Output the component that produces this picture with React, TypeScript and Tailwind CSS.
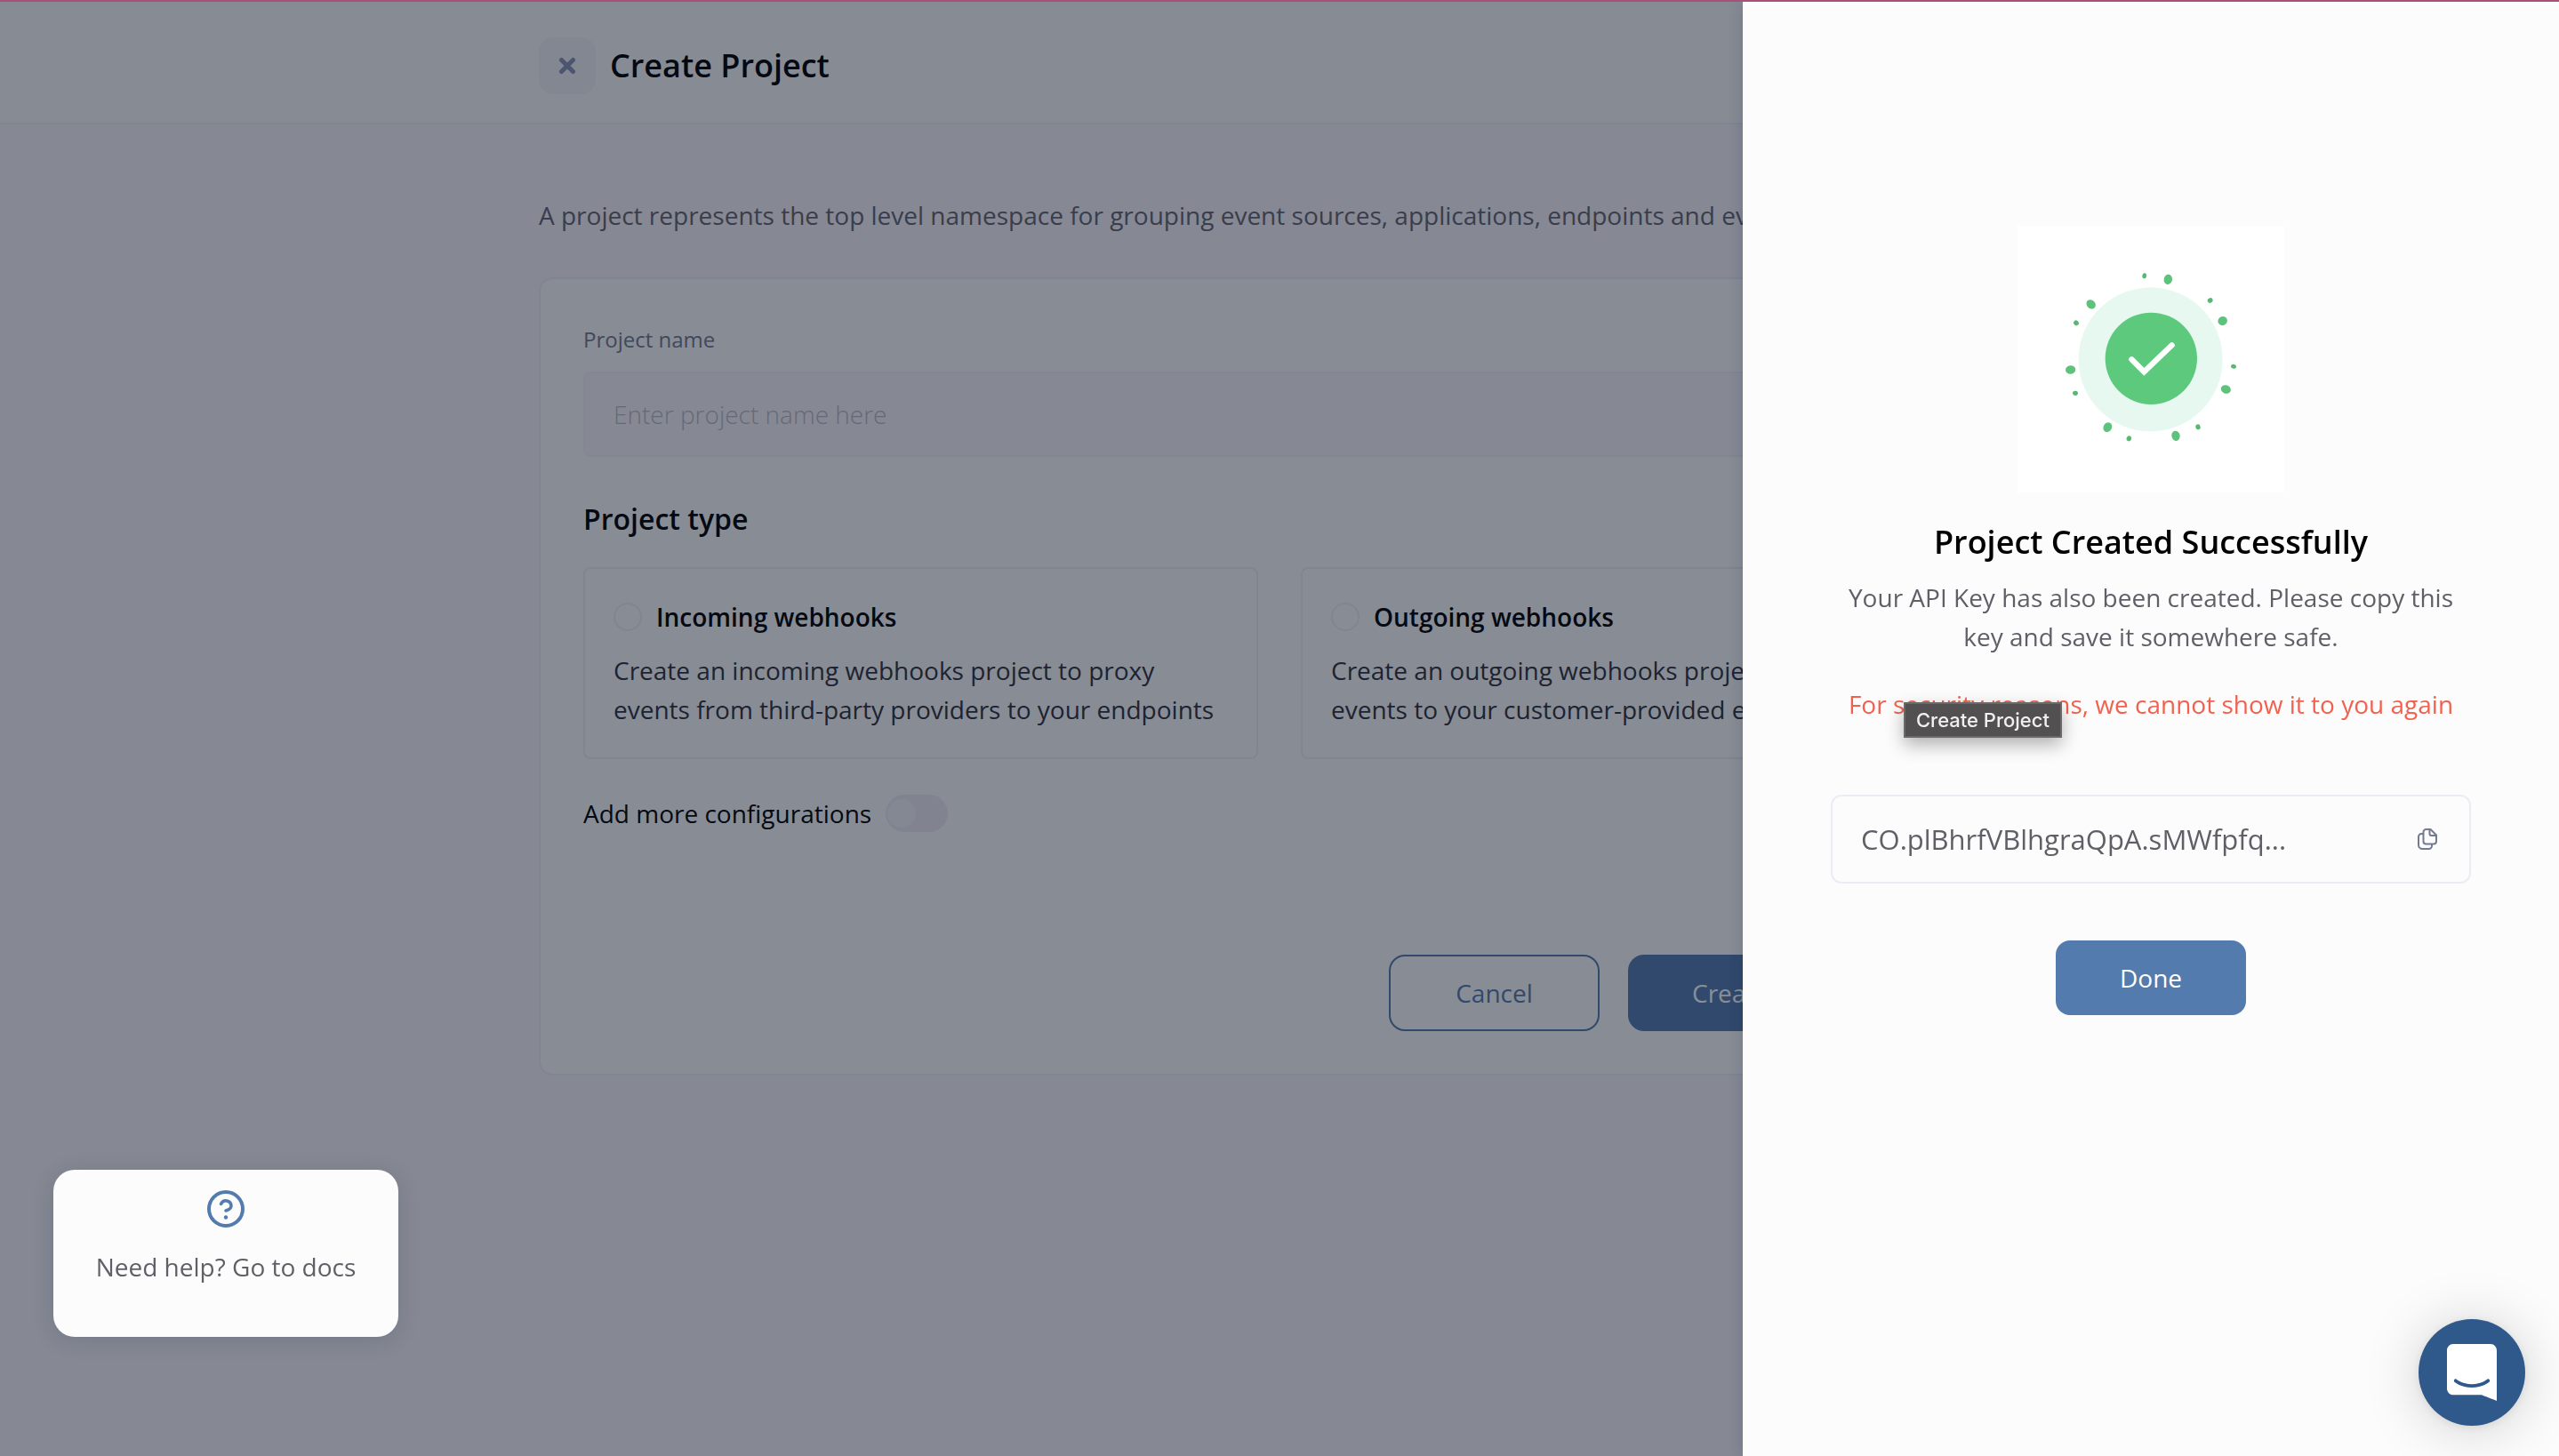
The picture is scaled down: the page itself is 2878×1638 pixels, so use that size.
const SPLATS = [
  { x: 598, y: 253, rx: 14, ry: 17, r: 10 },
  { x: 782, y: 393, rx: 16, ry: 15, r: -25 },
  { x: 793, y: 624, rx: 17, ry: 14, r: 20 },
  { x: 624, y: 781, rx: 14, ry: 17, r: -12 },
  { x: 394, y: 752, rx: 14, ry: 17, r: 30 },
  { x: 269, y: 558, rx: 17, ry: 14, r: -5 },
  { x: 338, y: 337, rx: 17, ry: 14, r: 45 },
  { x: 518, y: 241, rx: 7, ry: 9, r: 8 },
  { x: 740, y: 324, rx: 9, ry: 8, r: -30 },
  { x: 819, y: 547, rx: 9, ry: 7, r: 18 },
  { x: 699, y: 751, rx: 8, ry: 9, r: -15 },
  { x: 466, y: 790, rx: 8, ry: 9, r: 25 },
  { x: 285, y: 637, rx: 9, ry: 8, r: -5 },
  { x: 288, y: 400, rx: 9, ry: 8, r: 40 },
];

function SuccessArt() {
  return (
    <svg className="size-[300px] bg-white" viewBox="90 72 900 900" role="img" aria-label="Success">
      <circle cx="539" cy="523" r="243" fill="#e7f8f0" />
      <circle cx="541" cy="520" r="155" fill="#5dc97c" />
      <path d="M475 523L517 565L611 475" fill="none" stroke="#fff" strokeWidth="19" strokeLinecap="round" />
      {SPLATS.map((s) => (
        <ellipse
          key={`${s.x}-${s.y}`}
          cx={s.x}
          cy={s.y}
          rx={s.rx}
          ry={s.ry}
          fill={s.rx > 10 || s.ry > 10 ? "#5dc27b" : "#57b873"}
          transform={`rotate(${s.r} ${s.x} ${s.y})`}
        />
      ))}
    </svg>
  );
}

function CloseIcon() {
  return (
    <svg className="size-5" viewBox="0 0 20 20" fill="none" stroke="currentColor" strokeWidth="5" strokeLinecap="round" aria-hidden="true">
      <path d="M3.5 3.5L16.5 16.5M16.5 3.5L3.5 16.5" />
    </svg>
  );
}

function CopyIcon() {
  return (
    <svg className="h-6 w-[22px]" viewBox="0 0 22 24" fill="none" stroke="currentColor" strokeWidth="2" strokeLinejoin="round" strokeLinecap="round" aria-hidden="true">
      <path d="M9.500 1H14.500L21 7.500V14.500a3 3 0 0 1-3 3H9.500a3 3 0 0 1-3-3V4a3 3 0 0 1 3-3z" />
      <path d="M13.500 1.500V6a2 2 0 0 0 2 2H20.500" />
      <path d="M6 6H4.500A3.500 3.500 0 0 0 1 9.500V18.500A4.500 4.500 0 0 0 5.500 23H12.500A3.500 3.500 0 0 0 16 19.500V18" />
    </svg>
  );
}

function HelpIcon() {
  return (
    <svg className="size-[42px]" viewBox="0 0 42 42" fill="none" stroke="currentColor" aria-hidden="true">
      <circle cx="21" cy="21" r="19" strokeWidth="4" />
      <path d="M15.500 15.500A6 6 0 0 1 27 17.500C27 21 23.500 22.300 21 23" strokeWidth="3.500" strokeLinecap="round" />
      <circle cx="21" cy="30.500" r="2.200" fill="currentColor" stroke="none" />
    </svg>
  );
}

function ChatIcon() {
  return (
    <svg className="h-16 w-14" viewBox="0 0 28 32" fill="currentColor" aria-hidden="true">
      <path d="M28 32s-4.714-1.855-8.527-3.34H3.437C1.54 28.66 0 27.026 0 25.013V3.644C0 1.633 1.54 0 3.437 0h21.125c1.898 0 3.437 1.632 3.437 3.645v18.404H28V32zm-4.139-11.982a.88.88 0 00-1.292-.105c-.03.026-3.015 2.681-8.57 2.681-5.486 0-8.517-2.636-8.571-2.684a.88.88 0 00-1.29.107 1.01 1.01 0 00-.219.708.992.992 0 00.318.664c.142.128 3.537 3.15 9.762 3.15 6.226 0 9.621-3.022 9.763-3.15a.992.992 0 00.317-.664 1.01 1.01 0 00-.218-.707z" />
    </svg>
  );
}

function TypeOption({ value, title, text }: { value: string; title: string; text: string }) {
  return (
    <label className="block rounded-lg border-2 border-[#ecedf4] p-8">
      <span className="flex items-center gap-4 text-[28px] leading-[44px] font-semibold text-black">
        <input type="radio" name="project-type" value={value} className="size-8 appearance-none rounded-full border-2 border-[#ecedf4]" />
        {title}
      </span>
      <span className="mt-4 block text-[28px] leading-[44px] text-[#31323f]">{text}</span>
    </label>
  );
}

function CreateProjectPage() {
  return (
    <div>
      <header className="border-b-2 border-[#ecedf4] bg-[#fafafa] pt-[42px] pb-8">
        <div className="mx-auto flex max-w-[1666px] items-center gap-4">
          <button type="button" aria-label="Close" className="flex size-16 items-center justify-center rounded-2xl bg-[#f0f1f7] text-[#8692b4]">
            <CloseIcon />
          </button>
          <h1 className="text-[36px] leading-[48px] font-semibold text-black">Create Project</h1>
        </div>
      </header>
      <main className="mx-auto max-w-[1666px] pt-20">
        <p className="text-[28px] leading-[44px] text-[#66656f]">
          A project represents the top level namespace for grouping event sources, applications, endpoints and events.
        </p>
        <form className="mt-12 rounded-2xl border-2 border-[#ecedf4] bg-[#fcfcfc] p-12">
          <label htmlFor="project-name" className="block text-[24px] leading-[40px] font-medium text-[#737a91]">
            Project name
          </label>
          <input
            id="project-name"
            type="text"
            placeholder="Enter project name here"
            className="mt-4 block h-24 w-full rounded-lg border-2 border-[#f1f1f8] bg-[#f7f6fb] px-8 text-[28px] font-light text-black placeholder:text-[#b9b8c4]"
          />
          <h2 className="mt-[46px] mb-[30px] text-[32px] leading-[48px] font-semibold text-black">Project type</h2>
          <div className="grid grid-cols-2 gap-12">
            <TypeOption
              value="incoming"
              title="Incoming webhooks"
              text="Create an incoming webhooks project to proxy events from third-party providers to your endpoints"
            />
            <TypeOption
              value="outgoing"
              title="Outgoing webhooks"
              text="Create an outgoing webhooks project to publish events to your customer-provided endpoints"
            />
          </div>
          <div className="mt-10 flex items-center gap-4">
            <label htmlFor="more-config" className="text-[28px] leading-[42px] font-medium text-black">
              Add more configurations
            </label>
            <input
              id="more-config"
              type="checkbox"
              role="switch"
              className="flex h-[42px] w-[70px] appearance-none items-center rounded-full bg-[#edebf4] px-0.5 before:size-8 before:rounded-full before:bg-[#f4f3f9] before:content-['']"
            />
          </div>
          <div className="mt-[138px] flex justify-end gap-8">
            <button type="button" className="h-[86px] w-[237px] rounded-[18px] border-2 border-[#537bae] text-[28px] text-[#537bae]">
              Cancel
            </button>
            <button type="submit" title="Create Project" className="h-[86px] w-[391px] rounded-[18px] bg-[#537bae] pl-[72px] text-left text-[28px] text-white">
              Create Project
            </button>
          </div>
        </form>
      </main>
    </div>
  );
}

function SuccessPanel() {
  return (
    <aside role="dialog" aria-labelledby="success-title" className="fixed inset-y-0 right-0 w-[918px] bg-[#fcfcfc] shadow-[0_0_16px_rgba(12,26,75,0.2)]">
      <div className="mx-auto flex w-[720px] flex-col items-center pt-[254px] text-center">
        <SuccessArt />
        <h2 id="success-title" className="mt-7 text-[36px] leading-[56px] font-semibold text-black">
          Project Created Successfully
        </h2>
        <p className="mt-3 text-[28px] leading-[44px] text-[#5f5f68]">
          Your API Key has also been created. Please copy this key and save it somewhere safe.
        </p>
        <div className="relative mt-8">
          <p className="text-[28px] leading-[44px] text-[#f0624f]">For security reasons, we cannot show it to you again</p>
          <div role="tooltip" className="absolute top-5 left-[62px] border-2 border-[#6a6869] bg-[#525051] px-3 font-[Inter,sans-serif] text-[22px] leading-[36px] font-medium whitespace-nowrap text-[#f0f0f0] shadow-[0_8px_20px_rgba(0,0,0,0.3)]">
            Create Project
          </div>
        </div>
        <div className="mt-20 flex h-[100px] w-full items-center justify-between rounded-xl border-2 border-[#ecedf4] pr-9 pl-8">
          <span className="text-[31px] leading-[44px] text-[#5f5f68]">CO.plBhrfVBlhgraQpA.sMWfpfq...</span>
          <button type="button" aria-label="Copy API key" className="text-[#737a91]">
            <CopyIcon />
          </button>
        </div>
        <button type="button" className="mt-16 h-[84px] w-[214px] rounded-2xl bg-[#537bae] text-[28px] text-white">
          Done
        </button>
      </div>
    </aside>
  );
}

export default function App() {
  return (
    <div className="min-h-screen bg-[#f7f5fa] font-['Open_Sans',sans-serif]">
      <CreateProjectPage />
      <div className="fixed inset-0 bg-[rgba(11,19,36,0.48)]" />
      <SuccessPanel />
      <a
        href="#docs"
        className="fixed bottom-[134px] left-[60px] flex h-[188px] w-[388px] flex-col items-center rounded-3xl bg-[#fcfcfc] pt-[23px] text-[28px] leading-[44px] text-[#5f5f68] shadow-[0_4px_24px_rgba(12,26,75,0.15)]"
      >
        <span className="text-[#537bae]">
          <HelpIcon />
        </span>
        <span className="mt-[22px]">Need help? Go to docs</span>
      </a>
      <button
        type="button"
        aria-label="Open chat"
        className="fixed right-[38px] bottom-[34px] flex size-[120px] items-center justify-center rounded-full bg-[#30598b] text-white shadow-[0_2px_12px_rgba(0,0,0,0.08),0_4px_64px_rgba(0,0,0,0.18)]"
      >
        <ChatIcon />
      </button>
      <div className="fixed inset-x-0 top-0 h-0.5 bg-[#a9507a]" />
    </div>
  );
}
